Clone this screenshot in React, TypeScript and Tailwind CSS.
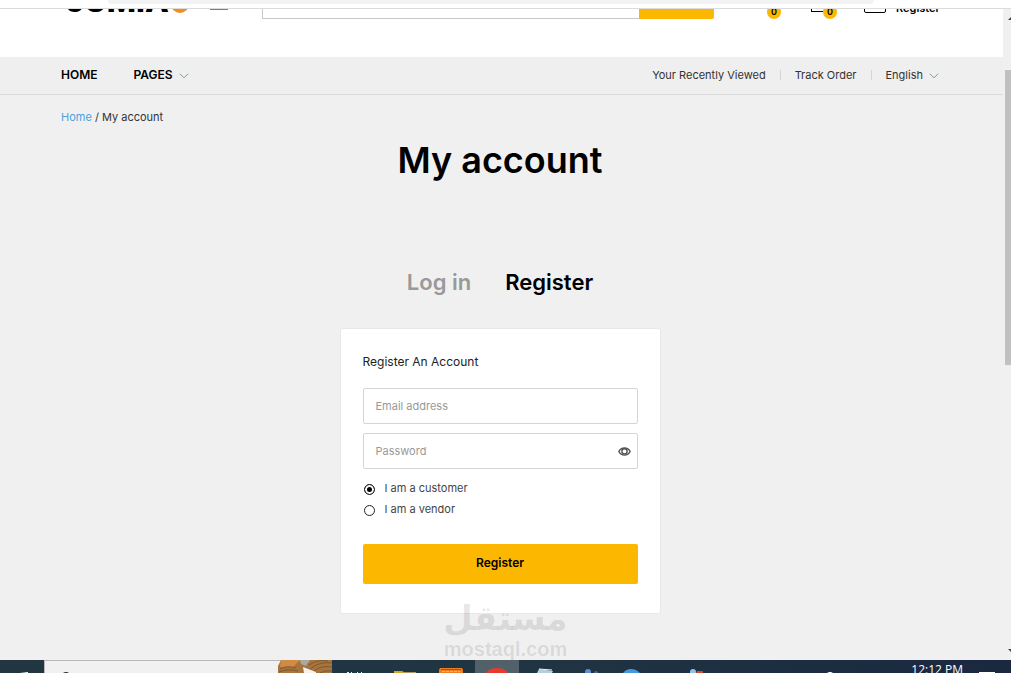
import { useState } from 'react';
import type { ReactNode } from 'react';

type Role = 'customer' | 'vendor';

const ROLES: { value: Role; label: string }[] = [
  { value: 'customer', label: 'I am a customer' },
  { value: 'vendor', label: 'I am a vendor' },
];

function Chevron() {
  return (
    <svg className="w-[10px] h-[6px] mt-[2px]" viewBox="0 0 10 6" fill="none" stroke="#7f9c9c">
      <path d="M0.8 0.8L5 4.8L9.2 0.8" />
    </svg>
  );
}

function CountBadge({ count }: { count: number }) {
  return (
    <span className="w-[14px] h-[14px] rounded-full bg-[#fcb700] text-[9px] leading-[14px] font-semibold text-center">
      {count}
    </span>
  );
}

function ShopHeader() {
  return (
    <header className="h-12 bg-white overflow-hidden">
      <div className="max-w-[881px] mx-auto -mt-7 h-[38px] flex items-end">
        <a href="#" aria-label="Jumia" className="flex items-end w-[149px] pl-[5px] pb-[6px]">
          <span className="text-[31px] leading-[25px] font-extrabold">JUMIA</span>
          <span className="w-[18px] h-[18px] ml-[2px] rounded-full bg-[#f68b1e]" />
        </a>
        <span className="w-[18px] h-px mb-[9px] bg-[#777f80]" />
        <form className="flex ml-[34px] w-[452px]">
          <input
            type="search"
            aria-label="Search"
            className="flex-1 min-w-0 h-[10px] border border-t-0 border-r-0 border-[#c8c8c8] focus:outline-none"
          />
          <button type="button" aria-label="Search" className="w-[75px] h-[10px] bg-[#fcb700] rounded-br-[2px]" />
        </form>
        <a href="#" aria-label="Wishlist" className="flex items-end ml-[53px]">
          <CountBadge count={0} />
        </a>
        <a href="#" aria-label="Cart" className="flex items-end ml-[30px]">
          <span className="w-3 h-[10px] mb-[7px] border border-r-0 border-black" />
          <CountBadge count={0} />
        </a>
        <a href="#" className="flex items-end ml-[27px] text-[11px] leading-4 font-semibold">
          <span className="w-[22px] h-[12px] mb-[6px] mr-[10px] border border-black rounded-[2px]" />
          <span className="mb-[3px]">Register</span>
        </a>
      </div>
    </header>
  );
}

function NavBar() {
  return (
    <nav className="bg-[#efefef] border-b border-[#dcdcdc]">
      <div className="max-w-[881px] mx-auto h-[37px] pb-[2px] flex items-center justify-between">
        <div className="flex items-center gap-9 text-[12px] font-semibold">
          <a href="#">HOME</a>
          <a href="#" className="flex items-center gap-[6px]">
            PAGES
            <Chevron />
          </a>
        </div>
        <div className="flex items-center text-[11px] leading-4 text-[#333] pr-[3px]">
          <a href="#" className="pr-[14px]">Your Recently Viewed</a>
          <span className="w-px h-[10px] bg-[#d5d5d5]" />
          <a href="#" className="px-[14px]">Track Order</a>
          <span className="w-px h-[10px] bg-[#d5d5d5]" />
          <a href="#" className="flex items-center gap-[6px] pl-[14px]">
            English
            <Chevron />
          </a>
        </div>
      </div>
    </nav>
  );
}

function RegisterCard() {
  const [role, setRole] = useState<Role>('customer');
  const [showPassword, setShowPassword] = useState(false);

  return (
    <form className="w-[321px] max-w-full mx-auto bg-white border border-[#e8e8e8] rounded-[3px] px-[22px] pt-6 pb-[29px]">
      <h2 className="text-[12px] leading-[18px] text-[#222]">Register An Account</h2>

      <input
        type="email"
        aria-label="Email address"
        placeholder="Email address"
        className="block w-full h-9 mt-[17px] px-3 border border-[#d5d5d5] rounded-[2px] text-[11px] placeholder-[#999] focus:outline-none"
      />

      <div className="flex items-center h-9 mt-[9px] pl-3 pr-[6px] border border-[#d5d5d5] rounded-[2px]">
        <input
          type={showPassword ? 'text' : 'password'}
          aria-label="Password"
          placeholder="Password"
          className="flex-1 min-w-0 text-[11px] placeholder-[#999] focus:outline-none"
        />
        <button type="button" aria-label="Show password" onClick={() => setShowPassword(!showPassword)}>
          <svg className="w-[13px] h-[9px]" viewBox="0 0 13 9" fill="none" stroke="#555" strokeWidth="1.4">
            <path d="M0.8 4.5C2 2.2 4 1 6.5 1S11 2.2 12.2 4.5C11 6.8 9 8 6.5 8S2 6.8 0.8 4.5Z" />
            <circle cx="6.5" cy="4.3" r="2.6" />
          </svg>
        </button>
      </div>

      <div className="mt-[9px] text-[11px] leading-[21px] text-[#444]">
        {ROLES.map((item) => (
          <label key={item.value} className="flex items-center h-[21px]">
            <input
              type="radio"
              name="role"
              value={item.value}
              checked={role === item.value}
              onChange={() => setRole(item.value)}
              className="appearance-none w-[11px] h-[11px] ml-px mr-[10px] mt-[2px] rounded-full border border-[#222] bg-white checked:bg-black checked:shadow-[inset_0_0_0_2px_#fff]"
            />
            {item.label}
          </label>
        ))}
      </div>

      <button
        type="button"
        className="block w-full h-10 mt-6 pb-[2px] rounded-[2px] bg-[#fcb700] text-[12px] font-semibold"
      >
        Register
      </button>
    </form>
  );
}

function Watermark() {
  return (
    <div className="absolute inset-x-0 bottom-0 flex flex-col items-center pl-[8px] text-black/10 pointer-events-none">
      <span
        dir="rtl"
        lang="ar"
        className="text-[34px] leading-[40px] font-bold font-['DejaVu_Sans',sans-serif]"
      >
        مستقل
      </span>
      <span className="text-[20px] leading-[22px] font-bold font-['Liberation_Sans',sans-serif]">mostaql.com</span>
    </div>
  );
}

function Scrollbar() {
  return (
    <div className="w-2 shrink-0 flex flex-col items-end bg-[#f0f0f0]">
      <div className="h-[61px] pt-2">
        <svg className="w-[3px] h-[3px]" viewBox="0 0 3 3">
          <path d="M0 3L3 0V3Z" fill="#444" />
        </svg>
      </div>
      <div className="flex-1 w-[6px] bg-[#c0c0c0]" />
      <div className="flex-1 flex items-end">
        <svg className="w-[3px] h-[3px] mb-2" viewBox="0 0 3 3">
          <path d="M0 0H3V3Z" fill="#444" />
        </svg>
      </div>
    </div>
  );
}

function TaskButton({ label, active, children }: { label: string; active?: boolean; children: ReactNode }) {
  return (
    <button
      type="button"
      aria-label={label}
      className={`w-[44px] h-[13px] shrink-0 flex items-end justify-center ${active ? 'bg-[#52606a]' : ''}`}
    >
      <svg className="w-[44px] h-[13px]" viewBox="0 0 44 13">
        {children}
      </svg>
    </button>
  );
}

function Taskbar() {
  return (
    <footer className="h-[13px] flex overflow-hidden bg-linear-to-r from-[#223641] via-[#203543] to-[#1a2840]">
      <TaskButton label="Start">
        <path d="M20 13L28 12V13Z" fill="#fff" />
      </TaskButton>
      <div className="w-[288px] shrink-0 flex justify-between bg-[#f1f1f1] border-t border-l border-[#b9b9b9]">
        <svg className="w-6 h-3 ml-2" viewBox="0 0 24 12">
          <path d="M10 12Q13 10 16 12Z" fill="#1b2938" />
        </svg>
        <svg className="w-[54px] h-[13px] -mt-px" viewBox="0 0 54 13">
          <path d="M0 13V6L3 0H54V13Z" fill="#a5743f" />
          <path d="M3 0H22L15 7H2Z" fill="#d18b45" />
          <path d="M22 0L32 0L28 6L23 4Z" fill="#a9a9a0" />
          <path
            d="M32 9Q42 1 54 3M36 11Q44 5 54 7M42 13Q47 10 54 11M31 5Q40 -1 50 1M2 9Q9 5 18 8M1 12Q10 8 20 11"
            stroke="#80592a"
            fill="none"
          />
          <path d="M25 7L38 12V13H26Z" fill="#f5f1ed" />
        </svg>
      </div>
      <div className="flex gap-[2px] min-w-0">
        <TaskButton label="Task view">
          <path d="M15 12H17V13H15ZM19 12H20V13H19ZM25 12H26V13H25ZM29 12H30V13H29Z" fill="#e8eaec" />
        </TaskButton>
        <TaskButton label="File Explorer">
          <path d="M16 11H24L26 12H38V13H16Z" fill="#d9a51b" />
          <path d="M26 12H37V13H26Z" fill="#b49365" />
        </TaskButton>
        <TaskButton label="Xampp">
          <path d="M16 8H38L39 10V13H15V10Z" fill="#ee7d22" />
          <path d="M17 9.500H37" stroke="#b94f10" />
          <path d="M18 11.500H36" stroke="#ffb061" strokeDasharray="3 1" />
        </TaskButton>
        <span className="w-px shrink-0" />
        <span className="shrink-0" />
        <TaskButton label="Chrome" active>
          <path d="M11 13Q14 8 22 8T33 13Z" fill="#e33b2e" />
        </TaskButton>
        <TaskButton label="Notepad">
          <path d="M18 9L32 11L31 13H16Z" fill="#b9cedb" />
          <path d="M18 9L31 10" stroke="#eef4f7" />
        </TaskButton>
        <TaskButton label="Teams">
          <circle cx="21" cy="12" r="3" fill="#5d8fd6" />
          <circle cx="29" cy="13" r="2" fill="#4a64b0" />
        </TaskButton>
        <TaskButton label="Edge">
          <path d="M10 13Q13 9 18 9T27 13Z" fill="#4699dc" />
        </TaskButton>
        <TaskButton label="Snip">
          <circle cx="34" cy="12" r="3" fill="#8fc1eb" />
          <path d="M38 11H44V13H37Z" fill="#d5472e" />
        </TaskButton>
      </div>
      <div className="flex-1 flex justify-end text-white">
        <svg className="w-2 h-[13px] mr-[77px] shrink-0" viewBox="0 0 8 13">
          <path d="M1 13L3 12H5L7 13Z" fill="#fff" />
        </svg>
        <span className="text-[12px] leading-4 mt-[2px] mr-4 whitespace-nowrap font-['Open_Sans',sans-serif]">
          12:12 PM
        </span>
        <svg className="w-4 h-[13px] mr-4 shrink-0" viewBox="0 0 16 13">
          <path d="M0 12H16V13H0Z" fill="#fff" />
        </svg>
      </div>
    </footer>
  );
}

export default function App() {
  return (
    <div className="min-h-screen flex flex-col bg-[#f0f0f0] text-black font-[Inter,sans-serif]">
      <div className="h-[9px] bg-white border-b border-[#dadbdc] pl-[108px] pr-[137px]">
        <div className="h-1 rounded-b-full bg-[#f1f3f4]" />
      </div>

      <div className="flex-1 flex">
        <div className="relative flex-1 min-w-0">
          <ShopHeader />
          <NavBar />
          <main className="max-w-[881px] mx-auto pr-[3px] pb-[46px]">
            <div className="pt-[14px] text-[11px] leading-4 text-[#333]">
              <a href="#" className="text-[#4f9fdc]">Home</a> / <span>My account</span>
            </div>
            <h1 className="mt-[11px] text-[36px] leading-[48px] font-semibold text-center">My account</h1>
            <div className="flex justify-center gap-[34px] mt-[82px] mb-[30px] text-[22px] leading-8 font-semibold">
              <button type="button" className="text-[#999]">Log in</button>
              <button type="button">Register</button>
            </div>
            <RegisterCard />
          </main>
          <Watermark />
        </div>
        <Scrollbar />
      </div>

      <Taskbar />
    </div>
  );
}
